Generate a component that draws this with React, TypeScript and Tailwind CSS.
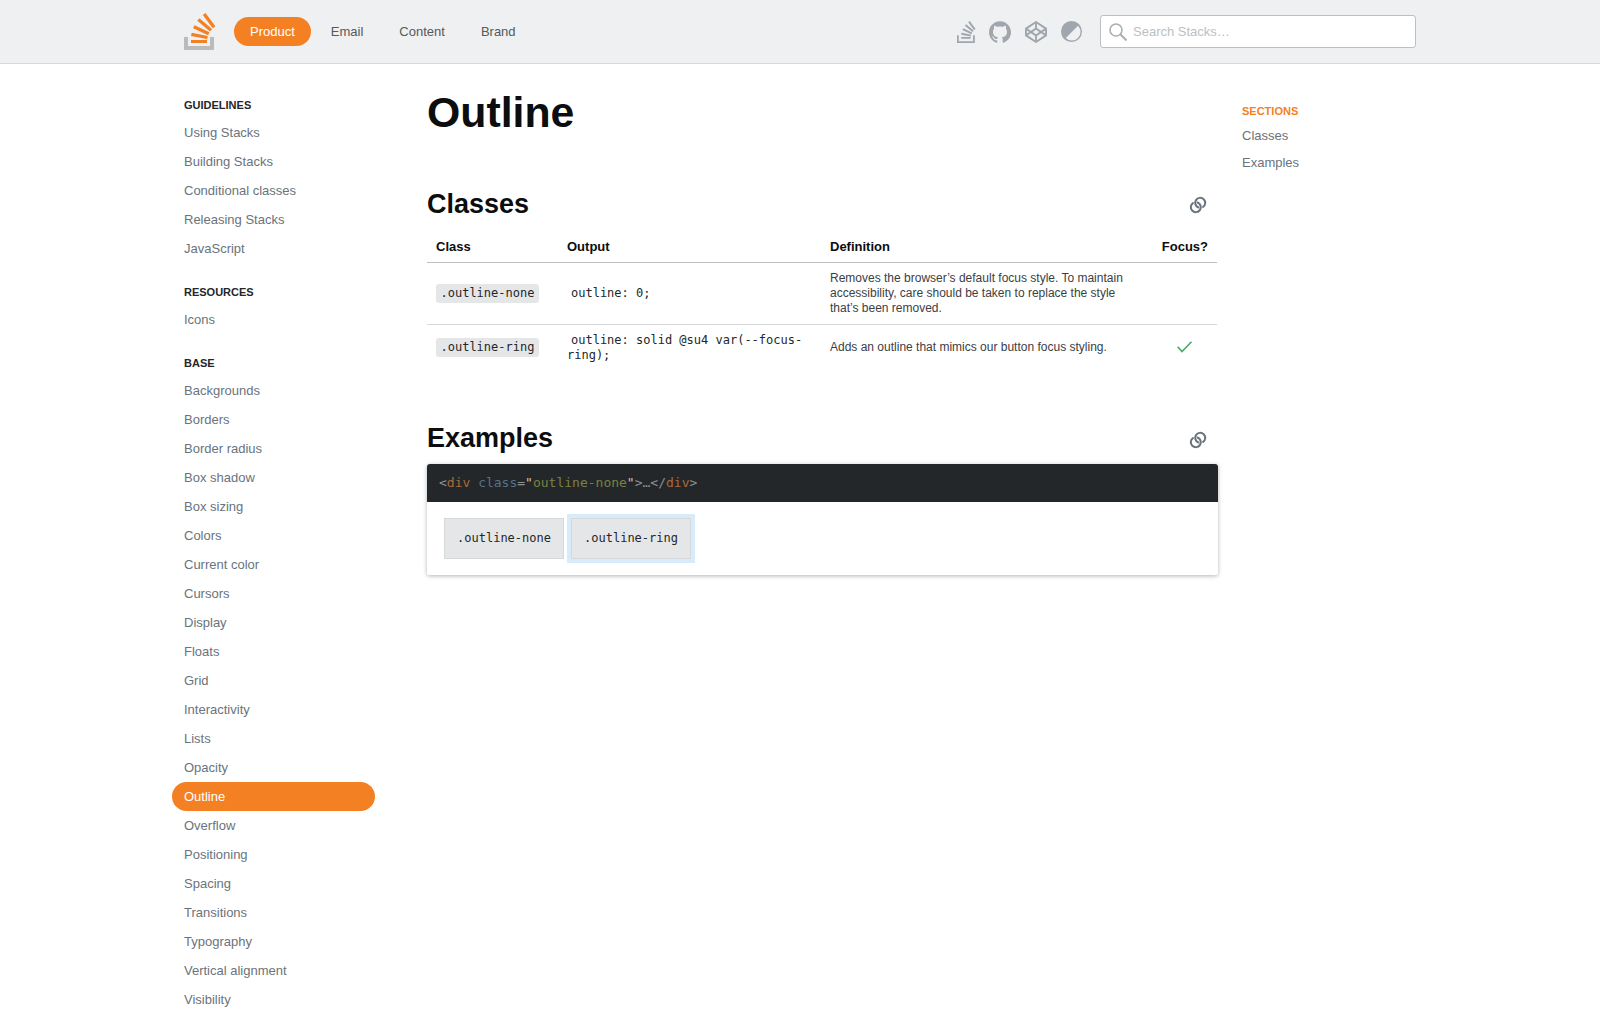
import React from "react";
import { FaCodepen } from "react-icons/fa";
import { SiGithub } from "react-icons/si";

const groups: { title: string; items: string[] }[] = [
  { title: "GUIDELINES", items: ["Using Stacks", "Building Stacks", "Conditional classes", "Releasing Stacks", "JavaScript"] },
  { title: "RESOURCES", items: ["Icons"] },
  {
    title: "BASE",
    items: ["Backgrounds", "Borders", "Border radius", "Box shadow", "Box sizing", "Colors", "Current color", "Cursors", "Display", "Floats", "Grid", "Interactivity", "Lists", "Opacity", "Outline", "Overflow", "Positioning", "Spacing", "Transitions", "Typography", "Vertical alignment", "Visibility", "Width & height"],
  },
];

const LinkIcon = () => (
  <svg width="18" height="18" viewBox="0 0 18 18" fill="none" className="text-[#6a737c]">
    <path d="M8.62 6.51A5 5 0 1 1 3.92 7.07" stroke="currentColor" strokeWidth="2" strokeLinecap="round" />
    <path d="M9.38 11.49A5 5 0 1 1 14.08 10.93" stroke="currentColor" strokeWidth="2" strokeLinecap="round" />
  </svg>
);

const Logo = () => (
  <svg width="32" height="37" viewBox="0 0 32 37">
    <path d="M26 33v-9h4v13H0V24h4v9h22z" fill="#BCBBBB" />
    <path d="M21.5 0l-2.7 2 9.9 13.3 2.7-2L21.5 0zM26 18.4L13.3 7.8l2.1-2.5 12.7 10.6-2.1 2.5zM9.1 15.2l15 7 1.4-3-15-7-1.4 3zm14 10.79l.68-2.95-16.1-3.35L7 23l16.1 2.99zM23 30H7v-3h16v3z" fill="#F48024" />
  </svg>
);

const SmallStack = () => (
  <svg width="19" height="22" viewBox="0 0 32 37">
    <path d="M1.5 24v11.5h27V24" fill="none" stroke="#9fa6ad" strokeWidth="3" />
    <path d="M21.5 0l-2.7 2 9.9 13.3 2.7-2L21.5 0zM26 18.4L13.3 7.8l2.1-2.5 12.7 10.6-2.1 2.5zM9.1 15.2l15 7 1.4-3-15-7-1.4 3zm14 10.79l.68-2.95-16.1-3.35L7 23l16.1 2.99zM23 30H7v-3h16v3z" fill="#9fa6ad" />
  </svg>
);

const ThemeIcon = () => (
  <svg width="21" height="21" viewBox="0 0 21 21">
    <circle cx="10.5" cy="10.5" r="10.5" fill="#9fa6ad" />
    <path d="M17 4.8A8.6 8.6 0 0 1 4.8 17z" fill="#eff0f1" />
  </svg>
);

const SearchIcon = () => (
  <svg width="18" height="18" viewBox="0 0 18 18" fill="none" stroke="#a9afb4">
    <circle cx="7" cy="7" r="6" strokeWidth="1.6" />
    <path d="M11.5 11.5l6 6" strokeWidth="2" />
  </svg>
);

const Check = () => (
  <svg width="18" height="18" viewBox="0 0 18 18" fill="none" stroke="#48a868" strokeWidth="1.6" className="mx-auto">
    <path d="M1.7 8.7L6 13.5 15.5 3.7" />
  </svg>
);

const mono = "font-['DejaVu_Sans_Mono',monospace]";

const Pill = ({ children }: { children: React.ReactNode }) => (
  <code className={`${mono} inline-block bg-[#e4e6e8] rounded-[3px] px-[4.5px] text-[12px] leading-[19px] text-[#242729]`}>{children}</code>
);

export default function App() {
  return (
    <div className="h-[1024px] overflow-hidden bg-white font-['Liberation_Sans',Arial,sans-serif] text-[13px]">
      <header className="h-[64px] bg-[#eff0f1] border-b border-[#d6d9dc] flex items-center pl-[184px] pr-[184px]">
        <Logo />
        <nav className="flex items-center gap-1 ml-[18px]">
          <a className="h-[29px] px-4 flex items-center rounded-full bg-[#f48024] text-white">Product</a>
          <a className="h-[29px] px-4 flex items-center text-[#535a60]">Email</a>
          <a className="h-[29px] px-4 flex items-center text-[#535a60]">Content</a>
          <a className="h-[29px] px-4 flex items-center text-[#535a60]">Brand</a>
        </nav>
        <div className="ml-auto flex items-center">
          <SmallStack />
          <SiGithub className="ml-[13px] text-[#9fa6ad]" size={22} />
          <FaCodepen className="ml-[14px] text-[#9fa6ad]" size={22} />
          <span className="ml-[14px] flex"><ThemeIcon /></span>
          <div className="ml-[18px] w-[316px] h-[33px] bg-white border border-[#bbc0c4] rounded-[3px] flex items-center pl-[8px]">
            <SearchIcon />
            <span className="ml-[6px] text-[#bbc0c4]">Search Stacks…</span>
          </div>
        </div>
      </header>

      <div className="flex pl-[172px]">
        <aside className="w-[203px] pt-[35px] flex flex-col gap-[23px] shrink-0">
          {groups.map((g) => (
            <div key={g.title}>
              <div className="pl-3 mb-[6px] text-[11px] leading-[13px] font-bold text-[#242729]">{g.title}</div>
              {g.items.map((it) =>
                it === "Outline" ? (
                  <div key={it} className="h-[29px] px-3 flex items-center rounded-full bg-[#f48024] text-white">{it}</div>
                ) : (
                  <div key={it} className="h-[29px] px-3 flex items-center text-[#6a737c]">{it}</div>
                )
              )}
            </div>
          ))}
        </aside>

        <main className="ml-[52px] w-[791px] shrink-0 pt-[22px]">
          <h1 className="text-[42.8px] leading-[52px] font-bold text-[#0c0d0e]">Outline</h1>

          <div className="mt-[50px] flex items-center justify-between h-[32px]">
            <h2 className="text-[27px] leading-[32px] font-bold text-[#0c0d0e]">Classes</h2>
            <span className="mr-[11px] pt-[1px] flex"><LinkIcon /></span>
          </div>

          <table className="mt-[14px] w-[790px] table-fixed border-collapse">
            <colgroup>
              <col className="w-[131px]" />
              <col className="w-[263px]" />
              <col className="w-[332px]" />
              <col className="w-[64px]" />
            </colgroup>
            <thead>
              <tr className="border-b border-[#bbc0c4] h-[28px] text-[#0c0d0e]">
                <th className="px-[9px] pb-[2px] text-left font-bold">Class</th>
                <th className="px-[9px] pb-[2px] text-left font-bold">Output</th>
                <th className="px-[9px] pb-[2px] text-left font-bold">Definition</th>
                <th className="pr-[9px] pb-[2px] text-right font-bold">Focus?</th>
              </tr>
            </thead>
            <tbody className="text-[#3b4045] text-[12px] leading-[15px]">
              <tr className="border-b border-[#d6d9dc] h-[62px]">
                <td className="px-[9px]"><Pill>.outline-none</Pill></td>
                <td className="pl-[9px] pr-[10px]"><code className={`${mono} pl-1 text-[12px] text-[#242729]`}>outline: 0;</code></td>
                <td className="pl-[9px] pr-[20px]">Removes the browser’s default focus style. To maintain accessibility, care should be taken to replace the style that’s been removed.</td>
                <td />
              </tr>
              <tr className="h-[44px]">
                <td className="px-[9px] pt-[2px]"><Pill>.outline-ring</Pill></td>
                <td className="pl-[9px] pr-[10px] pt-[4px]"><code className={`${mono} pl-1 text-[12px] text-[#242729]`}>outline: solid @su4 var(--focus-ring);</code></td>
                <td className="px-[9px] pt-[2px]">Adds an outline that mimics our button focus styling.</td>
                <td className="pt-[2px]"><Check /></td>
              </tr>
            </tbody>
          </table>

          <div className="mt-[54px] mb-[10px] flex items-center justify-between h-[32px]">
            <h2 className="text-[27px] leading-[32px] font-bold text-[#0c0d0e]">Examples</h2>
            <span className="mr-[11px] pt-[3px] flex"><LinkIcon /></span>
          </div>

          <div className="rounded-[3px] shadow-[0_1px_4px_rgba(0,0,0,0.3)]">
            <div className={`${mono} h-[38px] bg-[#242729] rounded-t-[3px] flex items-center px-3 text-[13px] text-[#8a9096] whitespace-pre`}>
              <span>&lt;</span><span className="text-[#a96a3e]">div</span><span> </span><span className="text-[#55738a]">class</span><span>=</span><span className="text-[#c0c4c8]">"</span><span className="text-[#7d8042]">outline-none</span><span className="text-[#c0c4c8]">"</span><span>&gt;…&lt;/</span><span className="text-[#a96a3e]">div</span><span>&gt;</span>
            </div>
            <div className="pt-4 pb-4 pl-[17px] flex gap-[7px] bg-white rounded-b-[3px]">
              <div className={`${mono} w-[120px] h-[41px] pb-[1px] bg-[#e4e6e8] border border-[#d6d9dc] flex items-center justify-center text-[12px] text-[#242729]`}>.outline-none</div>
              <div className={`${mono} w-[120px] h-[41px] pb-[1px] bg-[#e4e6e8] border border-[#d6d9dc] flex items-center justify-center text-[12px] text-[#242729] shadow-[0_0_0_4px_#d7ebfb]`}>.outline-ring</div>
            </div>
          </div>
        </main>

        <aside className="ml-[24px] pt-[41px]">
          <div className="text-[11px] leading-[13px] font-bold text-[#f47f24] mb-[4px]">SECTIONS</div>
          <div className="h-[27px] flex items-center text-[#6a737c]">Classes</div>
          <div className="h-[27px] flex items-center text-[#6a737c]">Examples</div>
        </aside>
      </div>
    </div>
  );
}
